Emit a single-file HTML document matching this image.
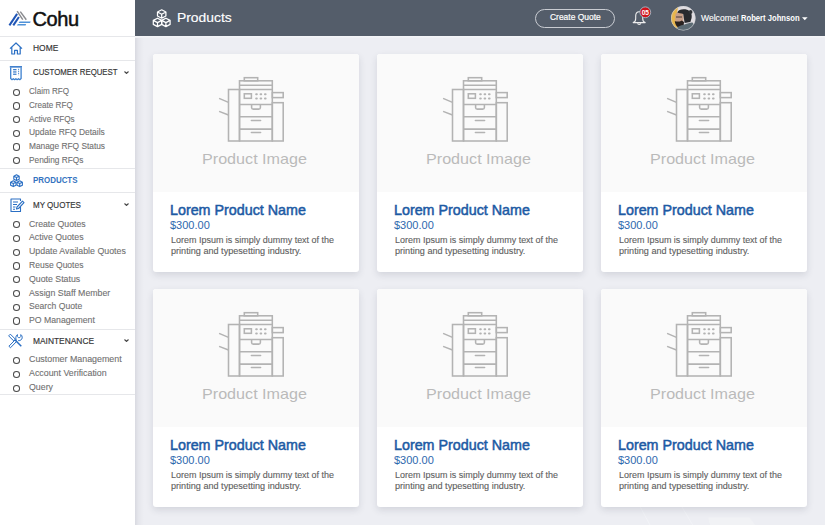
<!DOCTYPE html>
<html><head><meta charset="utf-8">
<style>
*{margin:0;padding:0;box-sizing:border-box}
html,body{width:825px;height:525px;overflow:hidden;font-family:"Liberation Sans",sans-serif;background:#eceef3}
#main{position:absolute;left:135px;top:0;width:690px;height:525px;background:#edeef3}
#shade{position:absolute;left:135px;top:36px;width:9px;height:489px;background:linear-gradient(90deg,rgba(0,0,30,.085),rgba(0,0,30,.03) 40%,rgba(0,0,30,0))}
#hdr{position:absolute;left:135px;top:0;width:690px;height:36px;background:#545d6a}
#side{position:absolute;left:0;top:0;width:135px;height:525px;background:#fff;}
.hl{position:absolute;left:0;width:135px;height:1px;background:#e6e7ea}
.t{position:absolute;white-space:nowrap;line-height:1}
.sec{font-size:8.7px;color:#333;left:33px;transform-origin:0 0;-webkit-text-stroke-width:0.15px}
.sub{font-size:8.7px;color:#707070;left:29.3px;transform-origin:0 0;-webkit-text-stroke-width:0.1px}
.dot{position:absolute;left:12.55px;width:7.8px;height:7.3px;border:1.4px solid #4a4a4a;border-radius:50%}
.chev{position:absolute;left:124px;width:5px;height:3px}
.card{position:absolute;width:206px;height:217.5px;background:#fff;border-radius:3px;box-shadow:0 3px 7px rgba(40,45,70,.13)}
.card .img{position:absolute;left:0;top:0;width:206px;height:138px;background:#fafafa;border-radius:3px 3px 0 0}
.card svg.pr{position:absolute;left:63px;top:21px}
.card .pi{position:absolute;left:49.4px;top:96.5px;font-size:15px;color:#bababa;line-height:1;white-space:nowrap;transform-origin:0 0;transform:scaleX(1.076)}
.card .nm{position:absolute;left:17px;top:148.9px;font-size:14.3px;-webkit-text-stroke-width:0.5px;color:#1d5aa4;white-space:nowrap;line-height:1}
.card .pr2{position:absolute;left:17px;top:166.0px;font-size:11px;color:#2e68ae;white-space:nowrap;line-height:1}
.card .ds{position:absolute;left:17.8px;font-size:9.4px;color:#606060;-webkit-text-stroke-width:0.12px;line-height:1;white-space:nowrap;transform-origin:0 0}
</style></head><body>
<div id="main"></div>
<div id="shade"></div>
<div id="hline" style="position:absolute;left:135px;top:36px;width:690px;height:2px;background:linear-gradient(#f5f6f9,#eff0f4)"></div>
<svg id="pat" style="position:absolute;left:0;top:0" width="825" height="525" viewBox="0 0 825 525">
  <path d="M640.3 507 L650 525" stroke="#f3f4f7" stroke-width="1" fill="none" opacity=".8"/>
  <path d="M682 507 L692.7 525" stroke="#f3f4f7" stroke-width="1" fill="none" opacity=".8"/>
  <path d="M708.2 517.6 H749.8 L755 525 H710 Z" fill="#f1f2f5" opacity=".8"/>
</svg>
<div id="hdr">
  <svg style="position:absolute;left:17px;top:8.5px" width="20" height="20" viewBox="0 0 20 20" fill="none" stroke="#fff" stroke-width="1.25" stroke-linejoin="round">
    <path d="M9.7 0.8 L13.90 3.00 L13.90 7.00 L9.7 9.20 L5.50 7.00 L5.50 3.00 Z M5.50 3.00 L9.7 5.20 L13.90 3.00 M9.7 5.20 V9.20"/>
    <path d="M5.5 9.2 L9.70 11.40 L9.70 15.40 L5.5 17.60 L1.30 15.40 L1.30 11.40 Z M1.30 11.40 L5.5 13.60 L9.70 11.40 M5.5 13.60 V17.60"/>
    <path d="M13.9 9.2 L18.10 11.40 L18.10 15.40 L13.9 17.60 L9.70 15.40 L9.70 11.40 Z M9.70 11.40 L13.9 13.60 L18.10 11.40 M13.9 13.60 V17.60"/>
  </svg>
  <div class="t" style="left:42.3px;top:11.47px;font-size:13.5px;color:#fff;transform-origin:0 0;transform:scaleX(1.026);-webkit-text-stroke-width:0.15px">Products</div>
  <div style="position:absolute;left:400.3px;top:8.8px;width:79.8px;height:19.2px;border:1.5px solid #c9ccd2;border-radius:10px"></div>
  <div class="t" style="left:414.6px;top:12.73px;font-size:9.3px;color:#fff;transform-origin:0 0;transform:scaleX(0.908);-webkit-text-stroke-width:0.2px">Create Quote</div>
  <svg style="position:absolute;left:494px;top:5px" width="24" height="22" viewBox="0 0 24 22">
    <path d="M4.2 17.6 Q6.7 16.6 6.7 13.4 L6.7 11 C6.7 8.4 8.3 6.8 10.2 6.8 C12.1 6.8 13.7 8.4 13.7 11 L13.7 13.4 Q13.7 16.6 16.2 17.6 Z" fill="none" stroke="#eee" stroke-width="1.1" stroke-linejoin="round"/>
    <path d="M8.6 18.2 C8.8 19.8 11.6 19.8 11.8 18.2" fill="none" stroke="#eee" stroke-width="1.1"/>
    <circle cx="16.3" cy="7.3" r="5.4" fill="#d0121b" stroke="#a9c9d6" stroke-width="0.8"/>
    <text x="16.3" y="9.7" font-size="6.6" font-weight="bold" fill="#fff" text-anchor="middle" font-family="Liberation Sans" letter-spacing="-0.2">05</text>
  </svg>
  <svg style="position:absolute;left:536.3px;top:5.5px" width="25" height="25" viewBox="0 0 25 25">
    <defs><clipPath id="av"><circle cx="12.3" cy="12.2" r="12.1"/></clipPath></defs>
    <g clip-path="url(#av)">
      <rect width="25" height="25" fill="#e0dde1"/>
      <path d="M0 0 H7.5 C5.5 6 5.2 14 6.8 25 H0 Z" fill="#e8b54c"/>
      <path d="M4.6 8 C6 6 9 5.6 11.6 6.4 L12.6 12 L12 17.5 L5 17.6 C4 14.5 3.9 11 4.6 8 Z" fill="#c79f88"/>
      <path d="M5 11 H11" stroke="#3a3030" stroke-width="0.9"/>
      <path d="M3.8 15 C5.2 15.8 7.2 15.4 8.8 15.6 L10.8 14.6 L13 16 L12.6 20.4 L6.5 21 C4.8 19.4 4 17.4 3.8 15 Z" fill="#2a2220"/>
      <path d="M6.3 6.6 C7.5 3.6 12 2.6 16 3.8 C19.6 5 21.4 8.4 20.6 12 L19.4 16 L13.6 17 L12.2 8 C10.2 7.2 7.6 7.4 6.3 6.6 Z" fill="#27292d"/>
      <circle cx="19.6" cy="6" r="1.9" fill="#2f3236"/>
      <path d="M4.5 25 C5.5 20.5 9.5 19.6 13.5 18.6 C16.5 17.6 19.5 16.4 21.5 16.6 C23.5 18.5 24.5 22 25 25 Z" fill="#5b6a73"/>
    </g>
    <circle cx="12.3" cy="12.2" r="12" fill="none" stroke="#cfd0d4" stroke-width="0.5"/>
  </svg>
  <div class="t" style="left:566.4px;top:14.48px;font-size:9px;color:#fff;transform-origin:0 0;transform:scaleX(0.953);-webkit-text-stroke-width:0.12px">Welcome!</div>
  <div class="t" style="left:606.4px;top:14.48px;font-size:9px;font-weight:bold;color:#fff;transform-origin:0 0;transform:scaleX(0.849)">Robert Johnson</div>
  <svg style="position:absolute;left:666.5px;top:17px" width="6" height="4" viewBox="0 0 6 4"><path d="M0 0.3 H5.6 L2.8 3.3 Z" fill="#fff"/></svg>
</div>
<div id="side">
  <svg style="position:absolute;left:0;top:0" width="34" height="30" viewBox="0 0 34 30">
    <g stroke="#8a8b8f" stroke-width="1.5" stroke-linecap="butt"><path d="M17.1 11.1 L22.8 19.7"/><path d="M20.3 11.6 L26.3 19.7"/></g>
    <g stroke="#1f55b5" stroke-width="2"><path d="M9.4 25.4 L17.1 13.9"/><path d="M13.3 25.4 L18.9 17"/></g>
    <path d="M19.6 21.4 H30.7 L30.1 22.9 H18.6 Z" fill="#4f92d8"/>
    <path d="M17.9 24.1 H26.1 L25.6 25.5 H16.9 Z" fill="#4f92d8"/>
  </svg>
  <div class="t" style="left:32.5px;top:8.6px;font-size:20px;color:#111;-webkit-text-stroke:0.5px #111;letter-spacing:-0.4px">Cohu</div>
  <!--SIDE-->
  <div class="hl" style="top:36px"></div>
  <svg style="position:absolute;left:9px;top:42px" width="14" height="13" viewBox="0 0 14 13" fill="none" stroke="#2a6fc4" stroke-width="1.2" stroke-linejoin="round">
    <path d="M1 6.6 L7 1 L13 6.6 M2.8 5.2 V12 H5.6 V8.4 H8.4 V12 H11.2 V5.2"/>
  </svg>
  <div class="t sec" style="top:44.04px;transform:scaleX(0.971);">HOME</div>
  <div class="hl" style="top:60px"></div>
  <svg style="position:absolute;left:6px;top:63px" width="22" height="20" viewBox="0 0 22 20">
    <rect x="3.8" y="3.1" width="12.2" height="1.5" fill="#2f74c8"/>
    <path d="M4.7 4.4 V15.6 L6.0 16.7 L7.3 15.7 L8.6 16.7 L9.9 15.7 L11.2 16.7 L12.5 15.7 L13.8 16.7 L15.1 15.6 V4.4" fill="none" stroke="#3c80cf" stroke-width="1.3" stroke-linejoin="round"/>
    <g fill="#3d7fcc"><rect x="7.1" y="6" width="3.4" height="1.3"/><rect x="7.1" y="8.3" width="3.4" height="1.3"/><rect x="7.1" y="10.6" width="3.4" height="1.3"/></g>
    <path d="M12.6 5.8 V12.2" stroke="#3d7fcc" stroke-width="0.9" stroke-dasharray="1.3 0.7"/>
  </svg>
  <div class="t sec" style="top:68.24px;transform:scaleX(0.900);">CUSTOMER REQUEST</div>
  <svg class="chev" style="top:70.8px" viewBox="0 0 5 3"><path d="M0.5 0.5 L2.5 2.4 L4.5 0.5" fill="none" stroke="#444" stroke-width="1.15"/></svg>
  <div class="dot" style="top:88.60px"></div><div class="t sub" style="top:87.24px;transform:scaleX(0.931)">Claim RFQ</div>
  <div class="dot" style="top:102.31px"></div><div class="t sub" style="top:100.95px;transform:scaleX(0.933)">Create RFQ</div>
  <div class="dot" style="top:116.02px"></div><div class="t sub" style="top:114.66px;transform:scaleX(0.937)">Active RFQs</div>
  <div class="dot" style="top:129.73px"></div><div class="t sub" style="top:128.37px;transform:scaleX(0.975)">Update RFQ Details</div>
  <div class="dot" style="top:143.44px"></div><div class="t sub" style="top:142.08px;transform:scaleX(0.960)">Manage RFQ Status</div>
  <div class="dot" style="top:157.15px"></div><div class="t sub" style="top:155.79px;transform:scaleX(0.953)">Pending RFQs</div>
  <div class="hl" style="top:168px"></div>
  <svg style="position:absolute;left:9px;top:173.5px" width="15" height="14" viewBox="0 0 15 14" fill="none" stroke="#2a6fc4" stroke-width="1.1" stroke-linejoin="round">
    <path d="M7.5 0.8 L10.2 2.2 L10.2 5.2 L7.5 6.6 L4.8 5.2 L4.8 2.2 Z M4.8 2.2 L7.5 3.6 L10.2 2.2 M7.5 3.6 V6.6"/>
    <path d="M4.3 6.8 L7 8.2 L7 11.2 L4.3 12.6 L1.6 11.2 L1.6 8.2 Z M1.6 8.2 L4.3 9.6 L7 8.2 M4.3 9.6 V12.6"/>
    <path d="M10.7 6.8 L13.4 8.2 L13.4 11.2 L10.7 12.6 L8 11.2 L8 8.2 Z M8 8.2 L10.7 9.6 L13.4 8.2 M10.7 9.6 V12.6"/>
  </svg>
  <div class="t sec" style="top:176.34px;transform:scaleX(0.913);color:#3473c0;font-weight:bold;-webkit-text-stroke-width:0">PRODUCTS</div>
  <div class="hl" style="top:192px"></div>
  <svg style="position:absolute;left:10px;top:197.5px" width="15" height="15" viewBox="0 0 15 15" fill="none" stroke="#2a6fc4" stroke-width="1.1" stroke-linejoin="round">
    <path d="M10.5 3 V1 H1 V13.5 H10.5 V9"/>
    <path d="M3 4 H8 M3 6.5 H7 M3 9 H5.5 M3 11.3 H5"/>
    <path d="M6.5 11 L7 9 L12.5 3.2 L14 4.7 L8.5 10.5 Z"/>
  </svg>
  <div class="t sec" style="top:200.64px;transform:scaleX(0.923);">MY QUOTES</div>
  <svg class="chev" style="top:203px" viewBox="0 0 5 3"><path d="M0.5 0.5 L2.5 2.4 L4.5 0.5" fill="none" stroke="#444" stroke-width="1.15"/></svg>
  <div class="dot" style="top:221.05px"></div><div class="t sub" style="top:219.69px;transform:scaleX(1.002)">Create Quotes</div>
  <div class="dot" style="top:234.82px"></div><div class="t sub" style="top:233.46px;transform:scaleX(1.008)">Active Quotes</div>
  <div class="dot" style="top:248.59px"></div><div class="t sub" style="top:247.23px;transform:scaleX(1.014)">Update Available Quotes</div>
  <div class="dot" style="top:262.36px"></div><div class="t sub" style="top:261.00px;transform:scaleX(0.981)">Reuse Quotes</div>
  <div class="dot" style="top:276.13px"></div><div class="t sub" style="top:274.77px;transform:scaleX(1.009)">Quote Status</div>
  <div class="dot" style="top:289.90px"></div><div class="t sub" style="top:288.54px;transform:scaleX(1.010)">Assign Staff Member</div>
  <div class="dot" style="top:303.67px"></div><div class="t sub" style="top:302.31px;transform:scaleX(0.992)">Search Quote</div>
  <div class="dot" style="top:317.44px"></div><div class="t sub" style="top:316.08px;transform:scaleX(1.002)">PO Management</div>
  <div class="hl" style="top:328.5px"></div>
  <svg style="position:absolute;left:5px;top:330px" width="25" height="22" viewBox="0 0 25 22" fill="none" stroke="#2a6fc4" stroke-width="1" stroke-linejoin="round">
    <path d="M3.65 5.85 L5.35 4.15 L10.35 9.15 L8.65 10.85 Z"/>
    <path d="M10 10 L16.3 16.3" stroke-width="1.5"/>
    <path d="M3.92 16.22 L5.48 17.78 L11.78 11.28 L10.22 9.72 Z"/>
    <path d="M11.4 10.3 C10.5 8.8 10.6 6.6 11.8 5.2 L12.4 4.6 L12.4 6.6 L13.4 7.6 L14.8 7.6 L15.8 6.6 L15.8 4.6 C17.2 5.6 17.6 7.6 16.8 9 C16 10.3 14.6 10.8 13.2 10.6"/>
  </svg>
  <div class="t sec" style="top:336.64px;transform:scaleX(0.966);">MAINTENANCE</div>
  <svg class="chev" style="top:339px" viewBox="0 0 5 3"><path d="M0.5 0.5 L2.5 2.4 L4.5 0.5" fill="none" stroke="#444" stroke-width="1.15"/></svg>
  <div class="dot" style="top:356.75px"></div><div class="t sub" style="top:355.39px;transform:scaleX(1.021)">Customer Management</div>
  <div class="dot" style="top:370.65px"></div><div class="t sub" style="top:369.29px;transform:scaleX(1.018)">Account Verification</div>
  <div class="dot" style="top:384.55px"></div><div class="t sub" style="top:383.19px;transform:scaleX(1.014)">Query</div>
  <div class="hl" style="top:393.8px"></div>
<!--/SIDE-->
</div>
<div id="cards">
<div class="card" style="left:153px;top:54px">
  <div class="img"><svg class="pr" width="76" height="90" viewBox="0 0 76 90" fill="none" stroke="#b3b3b3" stroke-width="1.55">
<g transform="translate(-216 -75)">
<rect x="244.3" y="77.7" width="13.4" height="3.1"/>
<rect x="239.5" y="80.8" width="32.8" height="60.2"/>
<path d="M239.5 85.2 H272.3 M239.5 89.5 H272.3"/>
<rect x="244.3" y="93.8" width="7.1" height="4.5"/>
<path d="M256.15 94.2 H256.85 M260.55 94.2 H261.25 M264.95 94.2 H265.65 M256.15 98.4 H256.85 M260.55 98.4 H261.25 M264.95 98.4 H265.65" stroke-width="1.95" stroke-linecap="round"/>
<path d="M239.5 104.5 H272.3"/>
<path d="M251.6 104.5 V107.4 Q251.6 109.1 253.3 109.1 H258.7 Q260.4 109.1 260.4 107.4 V104.5"/>
<path d="M239.5 116.8 H272.3 M239.5 129.1 H272.3"/>
<path d="M251.4 120.5 H260.6 M251.4 132.5 H260.6" stroke-linecap="round"/>
<rect x="228.5" y="89.5" width="11" height="51.5"/>
<rect x="272.3" y="102.7" width="10.9" height="38.3"/>
<rect x="272.3" y="92.6" width="10.9" height="5"/>
<path d="M219.1 98.4 L228.5 102.4 M219.1 111.4 L228.5 115"/>
</g></svg><div class="pi">Product Image</div></div>
  <div class="nm">Lorem Product Name</div>
  <div class="pr2">$300.00</div>
  <div class="ds" style="top:180.74px;transform:scaleX(0.957)">Lorem Ipsum is simply dummy text of the</div>
  <div class="ds" style="top:191.64px;transform:scaleX(0.971)">printing and typesetting industry.</div>
</div>
<div class="card" style="left:377px;top:54px">
  <div class="img"><svg class="pr" width="76" height="90" viewBox="0 0 76 90" fill="none" stroke="#b3b3b3" stroke-width="1.55">
<g transform="translate(-216 -75)">
<rect x="244.3" y="77.7" width="13.4" height="3.1"/>
<rect x="239.5" y="80.8" width="32.8" height="60.2"/>
<path d="M239.5 85.2 H272.3 M239.5 89.5 H272.3"/>
<rect x="244.3" y="93.8" width="7.1" height="4.5"/>
<path d="M256.15 94.2 H256.85 M260.55 94.2 H261.25 M264.95 94.2 H265.65 M256.15 98.4 H256.85 M260.55 98.4 H261.25 M264.95 98.4 H265.65" stroke-width="1.95" stroke-linecap="round"/>
<path d="M239.5 104.5 H272.3"/>
<path d="M251.6 104.5 V107.4 Q251.6 109.1 253.3 109.1 H258.7 Q260.4 109.1 260.4 107.4 V104.5"/>
<path d="M239.5 116.8 H272.3 M239.5 129.1 H272.3"/>
<path d="M251.4 120.5 H260.6 M251.4 132.5 H260.6" stroke-linecap="round"/>
<rect x="228.5" y="89.5" width="11" height="51.5"/>
<rect x="272.3" y="102.7" width="10.9" height="38.3"/>
<rect x="272.3" y="92.6" width="10.9" height="5"/>
<path d="M219.1 98.4 L228.5 102.4 M219.1 111.4 L228.5 115"/>
</g></svg><div class="pi">Product Image</div></div>
  <div class="nm">Lorem Product Name</div>
  <div class="pr2">$300.00</div>
  <div class="ds" style="top:180.74px;transform:scaleX(0.957)">Lorem Ipsum is simply dummy text of the</div>
  <div class="ds" style="top:191.64px;transform:scaleX(0.971)">printing and typesetting industry.</div>
</div>
<div class="card" style="left:601px;top:54px">
  <div class="img"><svg class="pr" width="76" height="90" viewBox="0 0 76 90" fill="none" stroke="#b3b3b3" stroke-width="1.55">
<g transform="translate(-216 -75)">
<rect x="244.3" y="77.7" width="13.4" height="3.1"/>
<rect x="239.5" y="80.8" width="32.8" height="60.2"/>
<path d="M239.5 85.2 H272.3 M239.5 89.5 H272.3"/>
<rect x="244.3" y="93.8" width="7.1" height="4.5"/>
<path d="M256.15 94.2 H256.85 M260.55 94.2 H261.25 M264.95 94.2 H265.65 M256.15 98.4 H256.85 M260.55 98.4 H261.25 M264.95 98.4 H265.65" stroke-width="1.95" stroke-linecap="round"/>
<path d="M239.5 104.5 H272.3"/>
<path d="M251.6 104.5 V107.4 Q251.6 109.1 253.3 109.1 H258.7 Q260.4 109.1 260.4 107.4 V104.5"/>
<path d="M239.5 116.8 H272.3 M239.5 129.1 H272.3"/>
<path d="M251.4 120.5 H260.6 M251.4 132.5 H260.6" stroke-linecap="round"/>
<rect x="228.5" y="89.5" width="11" height="51.5"/>
<rect x="272.3" y="102.7" width="10.9" height="38.3"/>
<rect x="272.3" y="92.6" width="10.9" height="5"/>
<path d="M219.1 98.4 L228.5 102.4 M219.1 111.4 L228.5 115"/>
</g></svg><div class="pi">Product Image</div></div>
  <div class="nm">Lorem Product Name</div>
  <div class="pr2">$300.00</div>
  <div class="ds" style="top:180.74px;transform:scaleX(0.957)">Lorem Ipsum is simply dummy text of the</div>
  <div class="ds" style="top:191.64px;transform:scaleX(0.971)">printing and typesetting industry.</div>
</div>
<div class="card" style="left:153px;top:289.2px">
  <div class="img"><svg class="pr" width="76" height="90" viewBox="0 0 76 90" fill="none" stroke="#b3b3b3" stroke-width="1.55">
<g transform="translate(-216 -75)">
<rect x="244.3" y="77.7" width="13.4" height="3.1"/>
<rect x="239.5" y="80.8" width="32.8" height="60.2"/>
<path d="M239.5 85.2 H272.3 M239.5 89.5 H272.3"/>
<rect x="244.3" y="93.8" width="7.1" height="4.5"/>
<path d="M256.15 94.2 H256.85 M260.55 94.2 H261.25 M264.95 94.2 H265.65 M256.15 98.4 H256.85 M260.55 98.4 H261.25 M264.95 98.4 H265.65" stroke-width="1.95" stroke-linecap="round"/>
<path d="M239.5 104.5 H272.3"/>
<path d="M251.6 104.5 V107.4 Q251.6 109.1 253.3 109.1 H258.7 Q260.4 109.1 260.4 107.4 V104.5"/>
<path d="M239.5 116.8 H272.3 M239.5 129.1 H272.3"/>
<path d="M251.4 120.5 H260.6 M251.4 132.5 H260.6" stroke-linecap="round"/>
<rect x="228.5" y="89.5" width="11" height="51.5"/>
<rect x="272.3" y="102.7" width="10.9" height="38.3"/>
<rect x="272.3" y="92.6" width="10.9" height="5"/>
<path d="M219.1 98.4 L228.5 102.4 M219.1 111.4 L228.5 115"/>
</g></svg><div class="pi">Product Image</div></div>
  <div class="nm">Lorem Product Name</div>
  <div class="pr2">$300.00</div>
  <div class="ds" style="top:180.74px;transform:scaleX(0.957)">Lorem Ipsum is simply dummy text of the</div>
  <div class="ds" style="top:191.64px;transform:scaleX(0.971)">printing and typesetting industry.</div>
</div>
<div class="card" style="left:377px;top:289.2px">
  <div class="img"><svg class="pr" width="76" height="90" viewBox="0 0 76 90" fill="none" stroke="#b3b3b3" stroke-width="1.55">
<g transform="translate(-216 -75)">
<rect x="244.3" y="77.7" width="13.4" height="3.1"/>
<rect x="239.5" y="80.8" width="32.8" height="60.2"/>
<path d="M239.5 85.2 H272.3 M239.5 89.5 H272.3"/>
<rect x="244.3" y="93.8" width="7.1" height="4.5"/>
<path d="M256.15 94.2 H256.85 M260.55 94.2 H261.25 M264.95 94.2 H265.65 M256.15 98.4 H256.85 M260.55 98.4 H261.25 M264.95 98.4 H265.65" stroke-width="1.95" stroke-linecap="round"/>
<path d="M239.5 104.5 H272.3"/>
<path d="M251.6 104.5 V107.4 Q251.6 109.1 253.3 109.1 H258.7 Q260.4 109.1 260.4 107.4 V104.5"/>
<path d="M239.5 116.8 H272.3 M239.5 129.1 H272.3"/>
<path d="M251.4 120.5 H260.6 M251.4 132.5 H260.6" stroke-linecap="round"/>
<rect x="228.5" y="89.5" width="11" height="51.5"/>
<rect x="272.3" y="102.7" width="10.9" height="38.3"/>
<rect x="272.3" y="92.6" width="10.9" height="5"/>
<path d="M219.1 98.4 L228.5 102.4 M219.1 111.4 L228.5 115"/>
</g></svg><div class="pi">Product Image</div></div>
  <div class="nm">Lorem Product Name</div>
  <div class="pr2">$300.00</div>
  <div class="ds" style="top:180.74px;transform:scaleX(0.957)">Lorem Ipsum is simply dummy text of the</div>
  <div class="ds" style="top:191.64px;transform:scaleX(0.971)">printing and typesetting industry.</div>
</div>
<div class="card" style="left:601px;top:289.2px">
  <div class="img"><svg class="pr" width="76" height="90" viewBox="0 0 76 90" fill="none" stroke="#b3b3b3" stroke-width="1.55">
<g transform="translate(-216 -75)">
<rect x="244.3" y="77.7" width="13.4" height="3.1"/>
<rect x="239.5" y="80.8" width="32.8" height="60.2"/>
<path d="M239.5 85.2 H272.3 M239.5 89.5 H272.3"/>
<rect x="244.3" y="93.8" width="7.1" height="4.5"/>
<path d="M256.15 94.2 H256.85 M260.55 94.2 H261.25 M264.95 94.2 H265.65 M256.15 98.4 H256.85 M260.55 98.4 H261.25 M264.95 98.4 H265.65" stroke-width="1.95" stroke-linecap="round"/>
<path d="M239.5 104.5 H272.3"/>
<path d="M251.6 104.5 V107.4 Q251.6 109.1 253.3 109.1 H258.7 Q260.4 109.1 260.4 107.4 V104.5"/>
<path d="M239.5 116.8 H272.3 M239.5 129.1 H272.3"/>
<path d="M251.4 120.5 H260.6 M251.4 132.5 H260.6" stroke-linecap="round"/>
<rect x="228.5" y="89.5" width="11" height="51.5"/>
<rect x="272.3" y="102.7" width="10.9" height="38.3"/>
<rect x="272.3" y="92.6" width="10.9" height="5"/>
<path d="M219.1 98.4 L228.5 102.4 M219.1 111.4 L228.5 115"/>
</g></svg><div class="pi">Product Image</div></div>
  <div class="nm">Lorem Product Name</div>
  <div class="pr2">$300.00</div>
  <div class="ds" style="top:180.74px;transform:scaleX(0.957)">Lorem Ipsum is simply dummy text of the</div>
  <div class="ds" style="top:191.64px;transform:scaleX(0.971)">printing and typesetting industry.</div>
</div>
</div>
</body></html>
